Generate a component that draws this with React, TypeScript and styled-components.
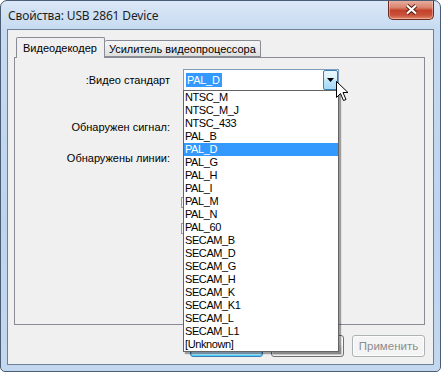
import styled, { createGlobalStyle } from 'styled-components';

const GlobalStyle = createGlobalStyle`
  html, body { margin: 0; padding: 0; background: #ffffff; }
  * { box-sizing: border-box; }
`;

const Window = styled.div`
  position: relative;
  width: 441px;
  height: 372px;
  border: 1px solid #4a5d74;
  border-radius: 7px 7px 5px 5px;
  background: linear-gradient(180deg, #dae7f6 0%, #c6dbf1 8%, #bed4ed 60%, #c3d8ef 100%);
  display: flex;
  flex-direction: column;
  padding: 0 6px 6px;
  overflow: hidden;
  font-family: 'Liberation Sans', Arial, sans-serif;
`;

const TitleBar = styled.div`
  height: 28px;
  display: flex;
  align-items: flex-start;
`;

const Title = styled.div`
  margin: 6px 0 0 1px;
  font-family: 'Noto Sans', 'Open Sans', sans-serif;
  font-size: 12px;
  color: #1e1e1e;
  letter-spacing: -0.15px;
`;

const CloseButton = styled.div`
  margin: -1px 0 0 auto;
  width: 46px;
  height: 20px;
  border: 1px solid #6b2a20;
  border-top: none;
  border-radius: 0 0 5px 5px;
  background: linear-gradient(180deg, #eab2a5 0%, #d9826e 40%, #c4412a 55%, #c8523a 80%, #e08a6c 100%);
  box-shadow: inset 0 0 0 1px rgba(255, 220, 210, 0.45);
  display: flex;
  align-items: center;
  justify-content: center;
`;

const Client = styled.div`
  flex: 1;
  border: 1px solid #6e8099;
  background: #f0f0f0;
  padding: 7px 8px 7px 6px;
  display: flex;
  flex-direction: column;
`;

const TabRow = styled.div`
  height: 20px;
  display: flex;
  align-items: flex-end;
  padding-left: 2px;
  position: relative;
  z-index: 1;
`;

const Tab = styled.div<{ $active?: boolean }>`
  height: ${(p) => (p.$active ? '21px' : '17px')};
  margin-bottom: ${(p) => (p.$active ? '-1px' : '0')};
  padding: ${(p) => (p.$active ? '1px 7px 0 6px' : '0 4px 0 4px')};
  border: 1px solid #898c95;
  border-bottom: ${(p) => (p.$active ? 'none' : '1px solid #898c95')};
  border-left: ${(p) => (p.$active ? '1px solid #898c95' : 'none')};
  border-radius: 2px 2px 0 0;
  background: ${(p) => (p.$active ? '#f0f0f0' : 'linear-gradient(180deg, #f5f5f5 0%, #ececec 50%, #dedede 100%)')};
  font-size: 11px;
  line-height: ${(p) => (p.$active ? '18px' : '16px')};
  color: #000;
  white-space: nowrap;
`;

const Panel = styled.div`
  height: 268px;
  border: 1px solid #898c95;
  background: #f0f0f0;
  padding: 11px 0 0 0;
  display: flex;
  flex-direction: column;
`;

const FormRow = styled.div<{ $h: number; $mt: number }>`
  display: flex;
  align-items: center;
  height: ${(p) => p.$h}px;
  margin-top: ${(p) => p.$mt}px;
`;

const Label = styled.div`
  width: 155px;
  text-align: right;
  font-size: 11px;
  color: #000;
  margin-right: 13px;
  white-space: nowrap;
`;

const Stub = styled.div`
  width: 130px;
  height: 11px;
  margin-left: -2px;
  border: 1px solid #9a9a9a;
  background: #f0f0f0;
`;

const ComboWrap = styled.div`
  position: relative;
  width: 156px;
  height: 22px;
`;

const Combo = styled.div`
  width: 156px;
  height: 22px;
  border: 1px solid #7f9db9;
  background: #fff;
  display: flex;
  align-items: center;
  padding-left: 2px;
  font-size: 11px;
  letter-spacing: -0.3px;
`;

const Selection = styled.span`
  background: #3399ff;
  color: #fff;
  padding: 1px 2px 1px 1px;
  line-height: 12px;
`;

const DropButton = styled.div`
  margin-left: auto;
  width: 15px;
  height: 20px;
  border: 1px solid #3c7fb1;
  border-radius: 2px;
  background: linear-gradient(180deg, #eaf6fd 0%, #d9f0fc 45%, #bee6fd 50%, #a7d9f5 100%);
  display: flex;
  align-items: center;
  justify-content: center;
`;

const DropList = styled.div`
  position: absolute;
  left: 0;
  top: 21px;
  width: 156px;
  border: 1px solid #646464;
  background: #fff;
  box-shadow: 2px 2px 1px rgba(0, 0, 0, 0.35);
  z-index: 5;
  font-size: 11px;
  letter-spacing: -0.4px;
`;

const Item = styled.div<{ $selected?: boolean }>`
  height: 13px;
  line-height: 13px;
  padding-left: 1px;
  color: ${(p) => (p.$selected ? '#fff' : '#000')};
  background: ${(p) => (p.$selected ? '#3399ff' : 'transparent')};
  white-space: nowrap;
`;

const ButtonRow = styled.div`
  margin-top: 10px;
  display: flex;
  justify-content: flex-end;
  gap: 8px;
`;

const Button = styled.div<{ $default?: boolean; $disabled?: boolean }>`
  width: 73px;
  height: 22px;
  border: 1px solid ${(p) => (p.$default ? '#3c7fb1' : p.$disabled ? '#adb2b5' : '#707070')};
  border-radius: 3px;
  background: ${(p) =>
    p.$disabled
      ? '#f4f4f4'
      : p.$default
        ? 'linear-gradient(180deg, #eaf6fd 0%, #d9f0fc 45%, #bee6fd 50%, #a7d9f5 100%)'
        : 'linear-gradient(180deg, #f2f2f2 0%, #ebebeb 45%, #dddddd 50%, #cfcfcf 100%)'};
  box-shadow: ${(p) => (p.$default ? 'inset 0 0 0 1px #48d4fe' : 'inset 0 0 0 1px rgba(255,255,255,0.7)')};
  display: flex;
  align-items: center;
  justify-content: center;
  font-size: 11.5px;
  color: ${(p) => (p.$disabled ? '#8d8d8d' : '#000')};
`;

const Cursor = styled.svg`
  position: absolute;
  left: 335px;
  top: 80px;
  z-index: 10;
`;

const ITEMS = [
  'NTSC_M',
  'NTSC_M_J',
  'NTSC_433',
  'PAL_B',
  'PAL_D',
  'PAL_G',
  'PAL_H',
  'PAL_I',
  'PAL_M',
  'PAL_N',
  'PAL_60',
  'SECAM_B',
  'SECAM_D',
  'SECAM_G',
  'SECAM_H',
  'SECAM_K',
  'SECAM_K1',
  'SECAM_L',
  'SECAM_L1',
  '[Unknown]',
];

export default function App() {
  return (
    <>
      <GlobalStyle />
      <Window>
        <TitleBar>
          <Title>Свойства: USB 2861 Device</Title>
          <CloseButton>
            <svg width="13" height="11" viewBox="0 0 13 11">
              <path
                d="M2 1.5 L6.5 5.5 L11 1.5 M2 9.5 L6.5 5.5 L11 9.5"
                stroke="#5a1a10"
                strokeWidth="4"
                fill="none"
              />
              <path
                d="M2 1.5 L6.5 5.5 L11 1.5 M2 9.5 L6.5 5.5 L11 9.5"
                stroke="#ffffff"
                strokeWidth="2.2"
                fill="none"
              />
            </svg>
          </CloseButton>
        </TitleBar>
        <Client>
          <TabRow>
            <Tab $active>Видеодекодер</Tab>
            <Tab>Усилитель видеопроцессора</Tab>
          </TabRow>
          <Panel>
            <FormRow $h={22} $mt={0}>
              <Label>:Видео стандарт</Label>
              <ComboWrap>
                <Combo>
                  <Selection>PAL_D</Selection>
                  <DropButton>
                    <svg width="7" height="4" viewBox="0 0 7 4">
                      <path d="M0 0 H7 L3.5 4 Z" fill="#000" />
                    </svg>
                  </DropButton>
                </Combo>
                <DropList>
                  {ITEMS.map((it) => (
                    <Item key={it} $selected={it === 'PAL_D'}>
                      {it}
                    </Item>
                  ))}
                </DropList>
              </ComboWrap>
            </FormRow>
            <FormRow $h={18} $mt={27}>
              <Label>Обнаружен сигнал:</Label>
            </FormRow>
            <FormRow $h={18} $mt={13}>
              <Label>Обнаружены линии:</Label>
            </FormRow>
            <FormRow $h={12} $mt={29}>
              <Label />
              <Stub />
            </FormRow>
            <FormRow $h={12} $mt={14}>
              <Label />
              <Stub />
            </FormRow>
          </Panel>
          <ButtonRow>
            <Button $default>ОК</Button>
            <Button>Отмена</Button>
            <Button $disabled>Применить</Button>
          </ButtonRow>
        </Client>
        <Cursor width="13" height="21" viewBox="0 0 13 21">
          <path
            d="M0.5 0.5 L0.5 16.5 L4.5 12.5 L7.5 19.5 L10 18.5 L7 11.5 L12 11.5 Z"
            fill="#fff"
            stroke="#000"
            strokeWidth="1"
          />
        </Cursor>
      </Window>
    </>
  );
}
